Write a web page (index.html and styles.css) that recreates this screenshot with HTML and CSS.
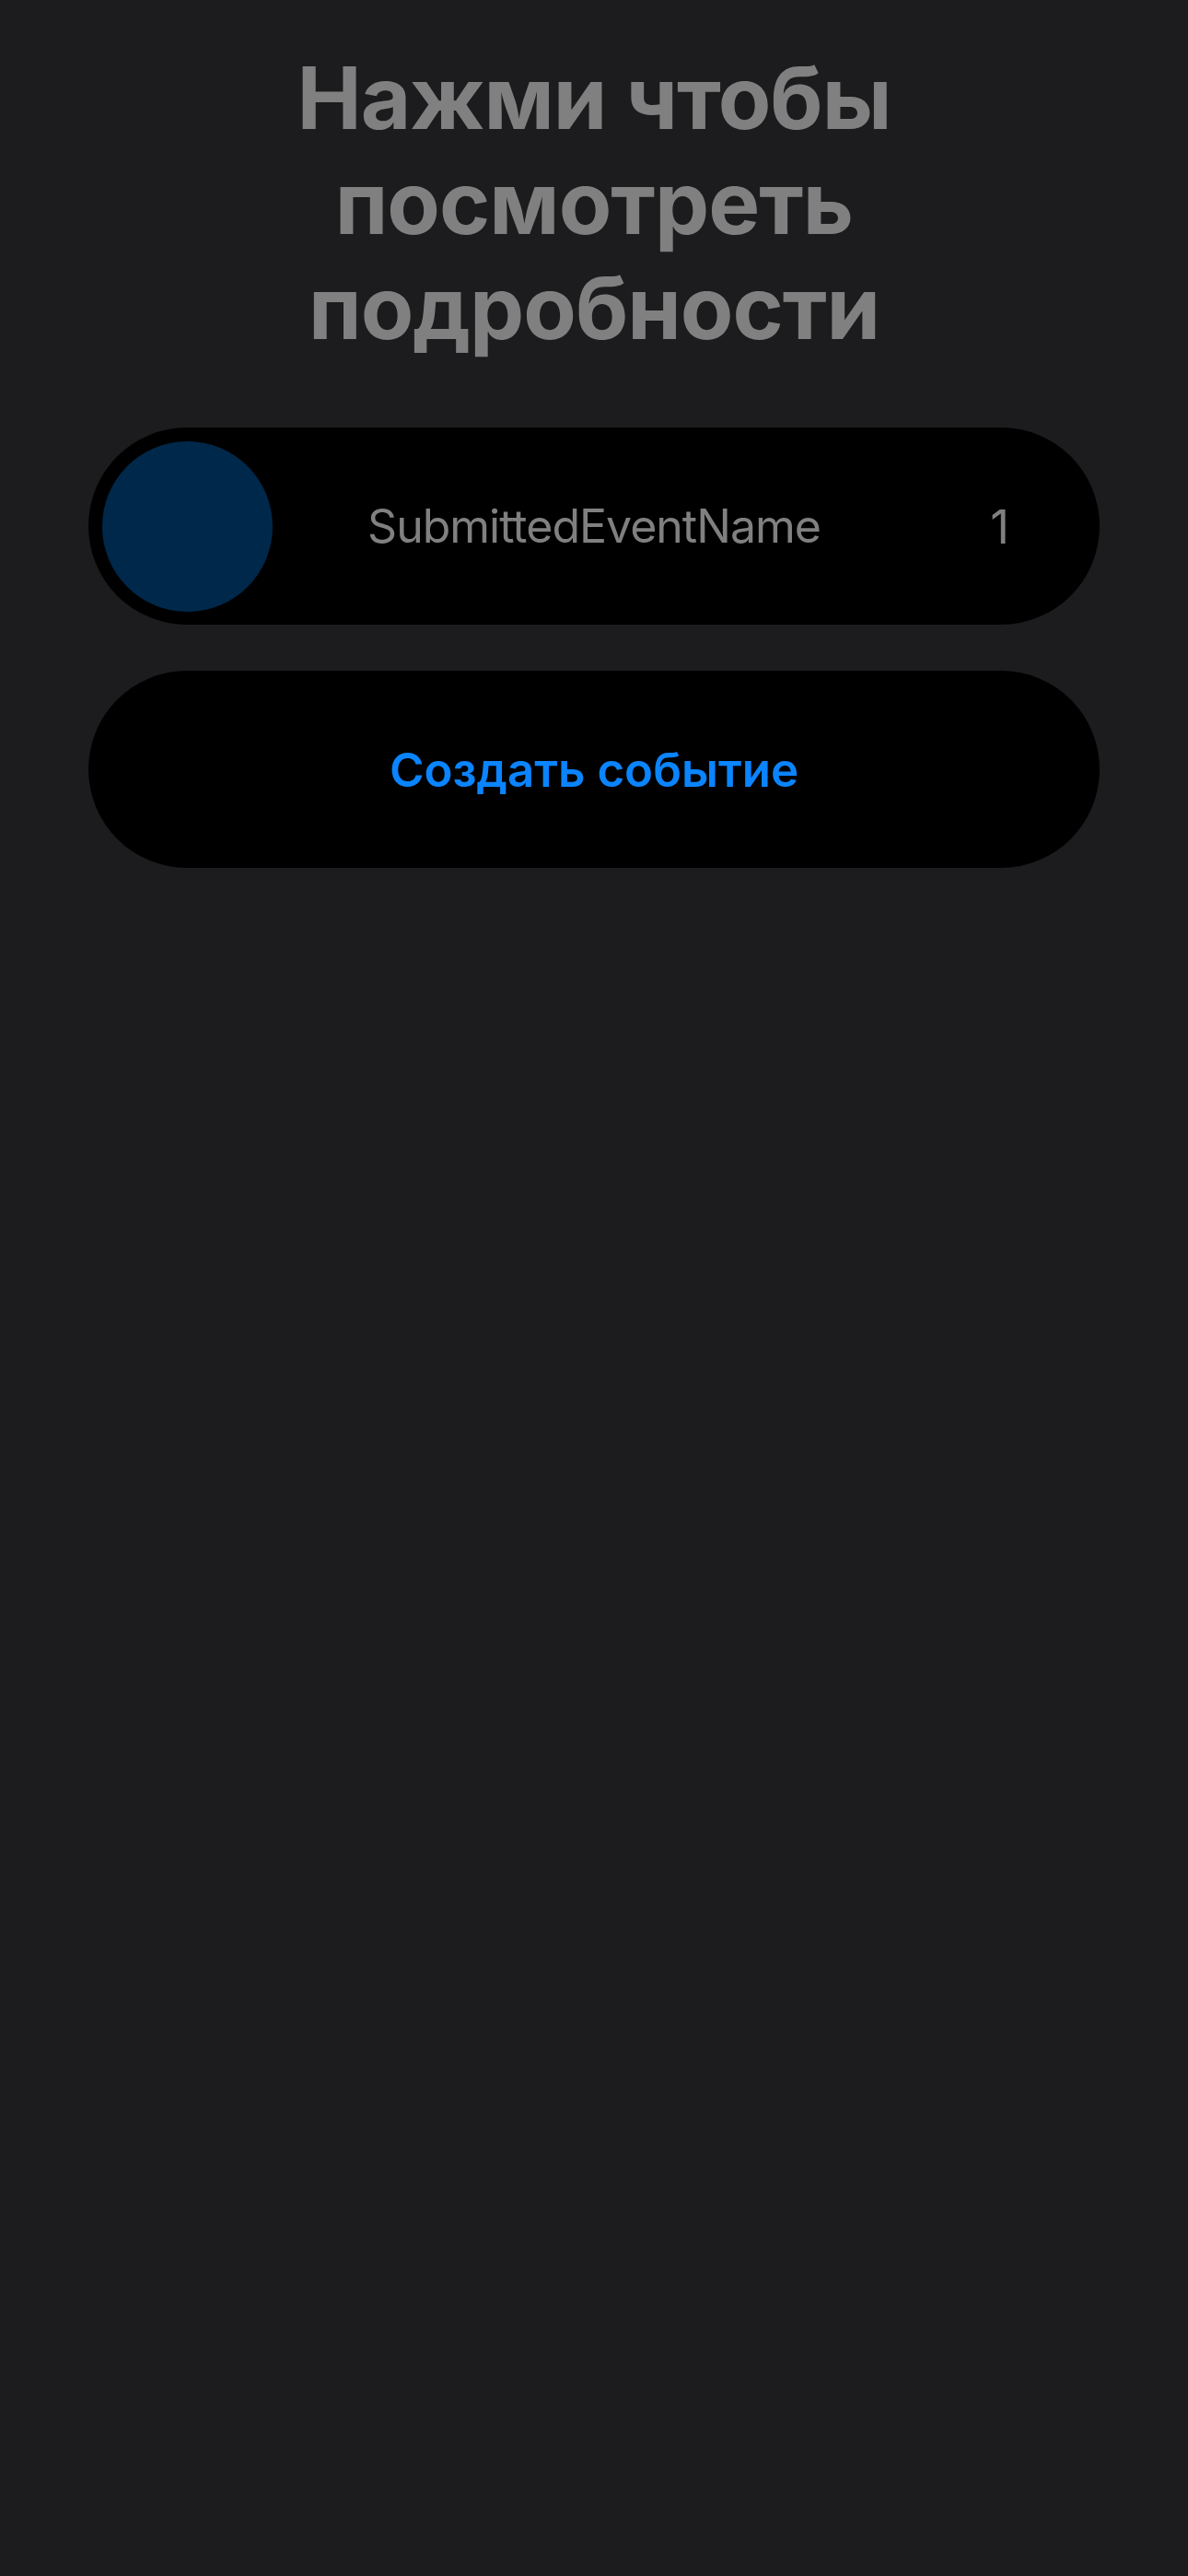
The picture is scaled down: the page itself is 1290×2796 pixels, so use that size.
FILE: index.html
```html
<!DOCTYPE html>
<html lang="ru">
<head>
<meta charset="utf-8">
<title>События</title>
<link rel="stylesheet" href="styles.css">
</head>
<body>
<main class="screen">
  <h1 class="title">Нажми чтобы посмотреть подробности</h1>
  <div class="list">
    <div class="event-row">
      <div class="avatar"></div>
      <div class="event-name">SubmittedEventName</div>
      <div class="event-count">1</div>
    </div>
    <button class="create-btn" type="button">Создать событие</button>
  </div>
</main>
</body>
</html>
```
FILE: styles.css
```css
html, body {
  margin: 0;
  padding: 0;
  background: #1c1c1e;
}
body {
  width: 1290px;
  min-height: 2796px;
  font-family: Inter, "Noto Sans", "DejaVu Sans", sans-serif;
}
.screen {
  display: flex;
  flex-direction: column;
  align-items: center;
  padding: 49px 96px 0;
}
.title {
  margin: 0;
  width: 760px;
  text-align: center;
  color: #808080;
  font-size: 94px;
  line-height: 114px;
  font-weight: 700;
  letter-spacing: -1px;
}
.list {
  margin-top: 73px;
  width: 100%;
  display: flex;
  flex-direction: column;
  gap: 50px;
}
.event-row {
  height: 214px;
  box-sizing: border-box;
  padding: 0 15px;
  border-radius: 107px;
  background: #000;
  display: grid;
  grid-template-columns: 1fr auto 1fr;
  align-items: center;
}
.avatar {
  width: 185px;
  height: 185px;
  border-radius: 50%;
  background: #00284a;
}
.event-name {
  color: #808080;
  font-size: 50px;
  font-weight: 400;
  letter-spacing: -1px;
}
.event-count {
  justify-self: end;
  margin-right: 83px;
  color: #808080;
  font-size: 51px;
}
.create-btn {
  height: 214px;
  border: 0;
  border-radius: 107px;
  background: #000;
  color: #0a84ff;
  font-family: inherit;
  font-size: 51px;
  font-weight: 600;
  letter-spacing: 0;
  padding: 0;
  cursor: pointer;
}
```
